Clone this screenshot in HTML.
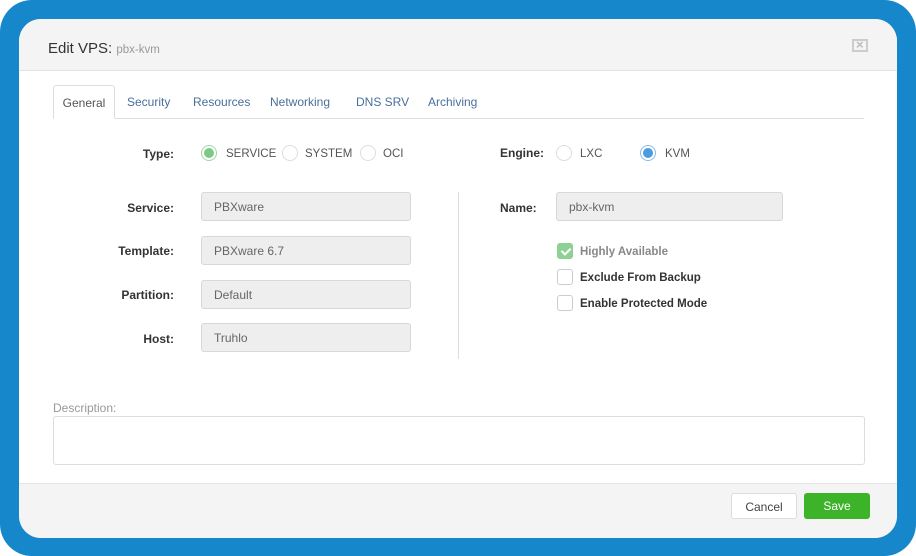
<!DOCTYPE html>
<html><head><meta charset="utf-8"><style>
*{box-sizing:border-box;margin:0;padding:0}
html,body{width:916px;height:556px;background:#fff;overflow:hidden;font-family:"Liberation Sans",sans-serif}
.bg{position:absolute;left:0;top:0;width:916px;height:556px;background:#1787cb;border-radius:32px}
.card{position:absolute;left:19px;top:19px;width:878px;height:519px;background:#fff;border-radius:22px;overflow:hidden}
.hdr{position:absolute;left:0;top:0;width:100%;height:52px;background:#f4f4f4;border-bottom:1px solid #e2e2e2}
.hdr .t{position:absolute;left:29px;top:21px;font-size:15px;color:#333}
.hdr .t span{font-size:11.5px;color:#999}
.close{position:absolute;left:833px;top:20px;width:16px;height:13px;border:2px solid #ccc;}
.close:before{content:"×";position:absolute;left:2px;top:-4px;font-size:13px;color:#bbb;font-weight:bold}
.tabs{position:absolute;left:34px;top:66px;width:811px;height:34px;border-bottom:1px solid #ddd}
.tab{position:absolute;top:10px;font-size:12px;color:#4a6f9a}
.tab.act{top:0;left:0;width:62px;height:34px;border:1px solid #ddd;border-bottom:1px solid #fff;border-radius:3px 3px 0 0;color:#555;padding-top:10px;text-align:center;background:#fff}
.lbl{position:absolute;font-size:12px;font-weight:bold;color:#333;text-align:right}
.inp{position:absolute;height:29px;background:#eee;border:1px solid #d8d8d8;border-radius:3px;font-size:12px;color:#666;padding:7px 12px}
.rad{position:absolute;width:16px;height:16px;border:1px solid #ddd;border-radius:50%;background:#fff}
.rad.g{border-color:#9fd6a5}.rad.g:after{content:"";position:absolute;left:2px;top:2px;width:10px;height:10px;border-radius:50%;background:#7ccb84}
.rad.b{border-color:#8bbbe8}.rad.b:after{content:"";position:absolute;left:2px;top:2px;width:10px;height:10px;border-radius:50%;background:#4b9be0}
.rt{position:absolute;font-size:11.5px;color:#555}
.cb{position:absolute;width:16px;height:16px;border:1px solid #ccc;border-radius:3px;background:#fff}
.cb.on{background:#8fd195;border-color:#8fd195}
.cb.on:after{content:"";position:absolute;left:5px;top:2px;width:4px;height:7px;border:solid #fff;border-width:0 2px 2px 0;transform:rotate(45deg)}
.ct{position:absolute;font-size:11.5px;font-weight:bold;color:#333}
.foot{position:absolute;left:0;top:464px;width:100%;height:55px;background:#f4f4f4;border-top:1px solid #e4e4e4}
.btn{position:absolute;height:26px;border-radius:3px;font-size:12px;text-align:center;padding-top:6px}
</style></head><body>
<div class="bg"></div>
<div class="card">
 <div class="hdr"><div class="t">Edit VPS: <span>pbx-kvm</span></div><div class="close"></div></div>
 <div class="tabs">
  <div class="tab act">General</div>
  <div class="tab" style="left:74px">Security</div>
  <div class="tab" style="left:140px">Resources</div>
  <div class="tab" style="left:217px">Networking</div>
  <div class="tab" style="left:303px">DNS SRV</div>
  <div class="tab" style="left:375px">Archiving</div>
 </div>
 <div class="lbl" style="left:80px;top:128px;width:75px">Type:</div>
 <div class="rad g" style="left:182px;top:126px"></div><div class="rt" style="left:207px;top:129px">SERVICE</div>
 <div class="rad" style="left:263px;top:126px"></div><div class="rt" style="left:286px;top:129px">SYSTEM</div>
 <div class="rad" style="left:341px;top:126px"></div><div class="rt" style="left:364px;top:129px">OCI</div>

 <div class="lbl" style="left:60px;top:182px;width:95px">Service:</div>
 <div class="inp" style="left:182px;top:173px;width:210px">PBXware</div>
 <div class="lbl" style="left:60px;top:225px;width:95px">Template:</div>
 <div class="inp" style="left:182px;top:217px;width:210px">PBXware 6.7</div>
 <div class="lbl" style="left:60px;top:269px;width:95px">Partition:</div>
 <div class="inp" style="left:182px;top:261px;width:210px">Default</div>
 <div class="lbl" style="left:60px;top:313px;width:95px">Host:</div>
 <div class="inp" style="left:182px;top:304px;width:210px">Truhlo</div>

 <div style="position:absolute;left:439px;top:173px;width:1px;height:167px;background:#ddd"></div>

 <div class="lbl" style="left:481px;top:127px;text-align:left">Engine:</div>
 <div class="rad" style="left:537px;top:126px"></div><div class="rt" style="left:561px;top:129px">LXC</div>
 <div class="rad b" style="left:621px;top:126px"></div><div class="rt" style="left:646px;top:129px">KVM</div>
 <div class="lbl" style="left:481px;top:182px;text-align:left">Name:</div>
 <div class="inp" style="left:537px;top:173px;width:227px">pbx-kvm</div>

 <div class="cb on" style="left:538px;top:224px"></div><div class="ct" style="left:561px;top:227px;color:#888">Highly Available</div>
 <div class="cb" style="left:538px;top:250px"></div><div class="ct" style="left:561px;top:253px">Exclude From Backup</div>
 <div class="cb" style="left:538px;top:276px"></div><div class="ct" style="left:561px;top:279px">Enable Protected Mode</div>

 <div style="position:absolute;left:34px;top:382px;font-size:12px;color:#999">Description:</div>
 <div style="position:absolute;left:34px;top:397px;width:812px;height:49px;border:1px solid #ddd;border-radius:3px"></div>

 <div class="foot">
  <div class="btn" style="left:712px;top:9px;width:66px;border:1px solid #ddd;background:#fff;color:#444">Cancel</div>
  <div class="btn" style="left:785px;top:9px;width:66px;background:#3db329;color:#fff">Save</div>
 </div>
</div>
</body></html>
